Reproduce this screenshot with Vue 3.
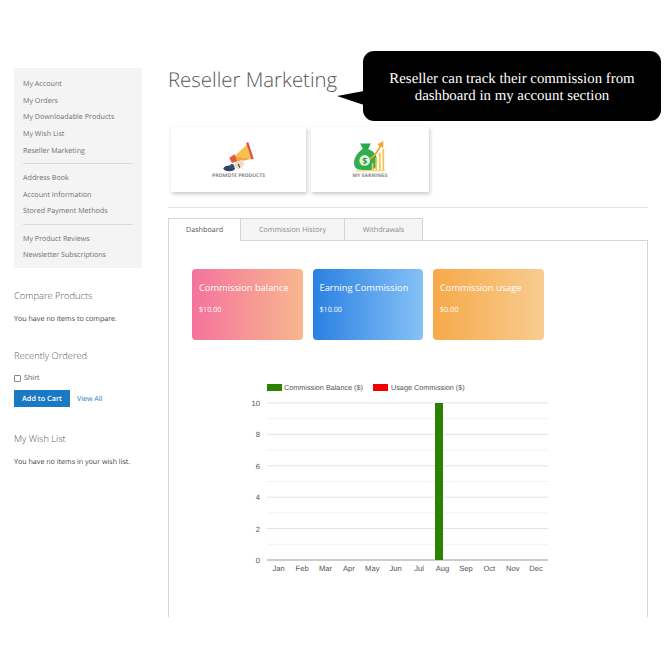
<script setup>
const groups = [
  ['My Account', 'My Orders', 'My Downloadable Products', 'My Wish List', 'Reseller Marketing'],
  ['Address Book', 'Account Information', 'Stored Payment Methods'],
  ['My Product Reviews', 'Newsletter Subscriptions'],
]
const stats = [
  { title: 'Commission balance', value: '$10.00', cls: 'pink' },
  { title: 'Earning Commission', value: '$10.00', cls: 'blue' },
  { title: 'Commission usage', value: '$0.00', cls: 'orange' },
]
const months = ['Jan','Feb','Mar','Apr','May','Jun','Jul','Aug','Sep','Oct','Nov','Dec']
const top = 28, step = 15.7, left = 27, unit = 23.4
const grid = Array.from({ length: 10 }, (_, i) => ({ y: top + i * step, major: i % 2 === 0 }))
const yLabels = [10, 8, 6, 4, 2, 0].map((v, i) => ({ v, y: top + i * 2 * step }))
const monthX = months.map((m, i) => ({ m, x: left + unit * (i + 0.5) }))
</script>

<template>
  <div class="page">
    <aside class="side">
      <nav class="nav">
        <ul v-for="(g, i) in groups" :key="i" class="nav-group">
          <li v-for="item in g" :key="item">{{ item }}</li>
        </ul>
      </nav>
      <section class="block compare">
        <h3>Compare Products</h3>
        <p>You have no items to compare.</p>
      </section>
      <section class="block recent">
        <h3>Recently Ordered</h3>
        <label class="check"><span class="box"></span>Shirt</label>
        <div class="actions">
          <span class="btn">Add to Cart</span>
          <span class="link">View All</span>
        </div>
      </section>
      <section class="block wish">
        <h3>My Wish List</h3>
        <p>You have no items in your wish list.</p>
      </section>
    </aside>

    <main class="main">
      <h1>Reseller Marketing</h1>
      <div class="callout">
        <svg class="tail" width="28" height="24" viewBox="0 0 28 24"><path d="M0 15 L27 10 L27 24 Z" fill="#000"/></svg>
        Reseller can track their commission from<br>dashboard in my account section
      </div>

      <div class="tiles">
        <div class="tile wide">
          <svg width="34" height="32" viewBox="0 0 38 36">
            <path d="M14 18 L28 5 L33 21 Z" fill="#f8c14d"/>
            <path d="M14 18 L33 21 L25 23 L16 24 Z" fill="#f3a53a"/>
            <path d="M8 20 L14 16 L17 24 L11 26 Z" fill="#e9573f"/>
            <path d="M27 3 L29.5 2.5 L35.5 21 L33 22 Z" fill="#e5503c"/>
            <path d="M15 25 L23 22 L25 28 L19 33 L13 31 Z" fill="#f0dccb"/>
            <path d="M18 27 L20 31" stroke="#5a4a42" stroke-width="1.4"/>
            <ellipse cx="8" cy="32" rx="6.5" ry="3.2" fill="#2f4468"/>
            <circle cx="11" cy="29.5" r="2.6" fill="#3a4f73"/>
            <path d="M33 7 L36 5 M35 12 L38 12" stroke="#bfe3ee" stroke-width="0.8"/>
          </svg>
          <span>PROMOTE PRODUCTS</span>
        </div>
        <div class="tile narrow">
          <svg width="34" height="32" viewBox="0 0 38 36">
            <path d="M8 4 L20 4 L17 10 L11 10 Z" fill="#27a84a"/>
            <path d="M11 10 L17 10 C25 13 28 20 27 27 C26 33 22 34 14 34 C6 34 1 33 1 26 C1 19 6 13 11 10 Z" fill="#2fae50"/>
            <circle cx="13" cy="23" r="6" fill="#e8f5dc"/>
            <text x="13" y="26.5" text-anchor="middle" class="dollar">$</text>
            <rect x="21" y="26" width="2" height="8" fill="#f4c64f"/>
            <rect x="25" y="20" width="2" height="14" fill="#f4c64f"/>
            <rect x="29" y="14" width="2" height="20" fill="#f4c64f"/>
            <rect x="33" y="10" width="2" height="24" fill="#f4c64f"/>
            <path d="M19 21 C24 18 28 13 31 6" fill="none" stroke="#f2a82f" stroke-width="2"/>
            <path d="M27 5 L34 1 L34 9 Z" fill="#f2a82f"/>
            <rect x="3" y="34" width="33" height="1.2" fill="#f4d35e"/>
          </svg>
          <span>MY EARNINGS</span>
        </div>
      </div>

      <hr class="rule">

      <div class="tabs">
        <div class="tab active">Dashboard</div>
        <div class="tab hist">Commission History</div>
        <div class="tab draw">Withdrawals</div>
      </div>
      <div class="panel">
        <div class="stats">
          <div v-for="s in stats" :key="s.title" class="stat" :class="s.cls">
            <div class="stat-title">{{ s.title }}</div>
            <div class="stat-value">{{ s.value }}</div>
          </div>
        </div>
        <svg class="chart" width="310" height="205" viewBox="0 0 310 205">
          <rect x="27" y="9" width="15" height="7" fill="#2a8200"/>
          <text x="44" y="15" class="legend">Commission Balance ($)</text>
          <rect x="133" y="9" width="15" height="7" fill="#f00000"/>
          <text x="151" y="15" class="legend">Usage Commission ($)</text>
          <line v-for="g in grid" :key="g.y" x1="27" x2="308" :y1="g.y" :y2="g.y"
                :stroke="g.major ? '#e4e4e4' : '#f2f2f2'" stroke-width="1"/>
          <line x1="27" x2="308" y1="185" y2="185" stroke="#9a9a9a" stroke-width="1"/>
          <rect x="195" y="28" width="8" height="157" fill="#2a8200"/>
          <text v-for="l in yLabels" :key="l.v" x="20" :y="l.y + 3" text-anchor="end" class="axis">{{ l.v }}</text>
          <text v-for="m in monthX" :key="m.m" :x="m.x" y="196" text-anchor="middle" class="axis">{{ m.m }}</text>
        </svg>
      </div>
    </main>
  </div>
</template>

<style>
html, body { margin: 0; background: #fff; }
</style>

<style scoped>
.page {
  width: 670px;
  height: 670px;
  box-sizing: border-box;
  overflow: hidden;
  display: flex;
  gap: 26px;
  padding: 68px 0 53px 14px;
  background: #fff;
  font-family: "Open Sans", sans-serif;
  color: #555;
  text-rendering: geometricPrecision;
}
.side { width: 128px; flex: none; }
.nav {
  background: #f4f4f4;
  height: 200px;
  box-sizing: border-box;
  padding: 8px 9px 0;
}
.nav-group {
  list-style: none;
  margin: 0;
  padding: 0 0 3.5px;
  border-bottom: 1px solid #dcdcdc;
}
.nav-group + .nav-group { padding-top: 6px; }
.nav-group:last-child { border-bottom: none; }
.nav-group li {
  font-size: 7.15px;
  line-height: 16.7px;
  color: #707070;
  white-space: nowrap;
}
.block h3 {
  margin: 0;
  font-size: 9.3px;
  line-height: 14px;
  font-weight: 300;
  color: #555;
}
.block p {
  margin: 0;
  font-size: 7.13px;
  line-height: 10px;
  color: #444;
}
.compare { margin-top: 21px; }
.compare p { margin-top: 11px; }
.recent { margin-top: 25px; }
.check {
  display: flex;
  align-items: center;
  gap: 3px;
  margin-top: 9px;
  height: 12px;
  font-size: 7.2px;
  color: #555;
}
.box {
  width: 5px;
  height: 5px;
  border: 1px solid #888;
  border-radius: 1px;
  background: #fff;
}
.actions { display: flex; align-items: center; gap: 7px; margin-top: 6px; }
.btn {
  width: 56px;
  height: 17px;
  line-height: 18.5px;
  text-align: center;
  background: #1979c3;
  color: #fff;
  font-size: 7.3px;
  font-weight: 600;
}
.link { font-size: 7.1px; color: #1979c3; padding-top: 1px; }
.wish { margin-top: 25px; }
.wish p { margin-top: 11px; }

.main { width: 480px; flex: none; position: relative; }
h1 {
  margin: 0;
  font-size: 20.4px;
  line-height: 23px;
  font-weight: 300;
  color: #555;
}
.callout {
  position: absolute;
  left: 195px;
  top: -17px;
  width: 298px;
  height: 70px;
  box-sizing: border-box;
  padding-top: 20px;
  background: #000;
  border-radius: 11px;
  color: #fff;
  text-align: center;
  font-family: "Liberation Serif", serif;
  font-size: 14.85px;
  line-height: 17.3px;
}
.tail { position: absolute; left: -26px; top: 30px; }
.tiles { display: flex; gap: 5px; margin: 36px 0 0 3px; }
.tile {
  height: 65px;
  box-sizing: border-box;
  padding-top: 13px;
  background: #fff;
  box-shadow: 1px 2px 4px rgba(0,0,0,.22);
  display: flex;
  flex-direction: column;
  align-items: center;
}
.wide { width: 135px; }
.narrow { width: 118px; }
.tile svg { display: block; flex: none; }
.tile span {
  margin-top: 0.5px;
  font-size: 5px;
  line-height: 7px;
  font-weight: 700;
  color: #888;
  white-space: nowrap;
}
.dollar { font-size: 10px; font-weight: 700; fill: #1f9a42; font-family: "Open Sans", sans-serif; }
.rule {
  margin: 15px 0 0;
  border: none;
  border-top: 1px solid #e3e3e3;
}
.tabs { display: flex; margin-top: 10px; height: 23px; position: relative; }
.tab {
  box-sizing: border-box;
  height: 23px;
  border: 1px solid #d5d5d5;
  border-left: none;
  background: #f5f5f5;
  color: #8a8a8a;
  font-size: 7.2px;
  line-height: 23px;
  text-align: center;
}
.active {
  width: 73px;
  border-left: 1px solid #d5d5d5;
  border-bottom: none;
  background: #fff;
  color: #555;
  position: relative;
  z-index: 1;
}
.hist { width: 104px; }
.draw { width: 78px; }
.panel {
  box-sizing: border-box;
  height: 377px;
  margin-top: -1px;
  border: 1px solid #d5d5d5;
  border-bottom: none;
  padding: 28px 0 0 23px;
  overflow: hidden;
}
.stats { display: flex; gap: 10px; }
.stat {
  width: 110.5px;
  height: 71px;
  box-sizing: border-box;
  padding: 12px 7px;
  border-radius: 4px;
  color: #fff;
}
.stat-title { font-size: 9.3px; line-height: 14px; white-space: nowrap; }
.stat-value { margin-top: 10px; font-size: 7.2px; line-height: 10px; }
.pink { background: linear-gradient(90deg, #f5739c, #f8b78f); }
.blue { background: linear-gradient(90deg, #2a80e2, #86c1f6); }
.orange { background: linear-gradient(90deg, #f6a94a, #f8cc90); }
.chart { display: block; margin: 35px 0 0 48px; }
.legend, .axis { font-family: "Liberation Sans", sans-serif; fill: #555; }
.legend { font-size: 7.25px; }
.axis { font-size: 7.6px; }
</style>
